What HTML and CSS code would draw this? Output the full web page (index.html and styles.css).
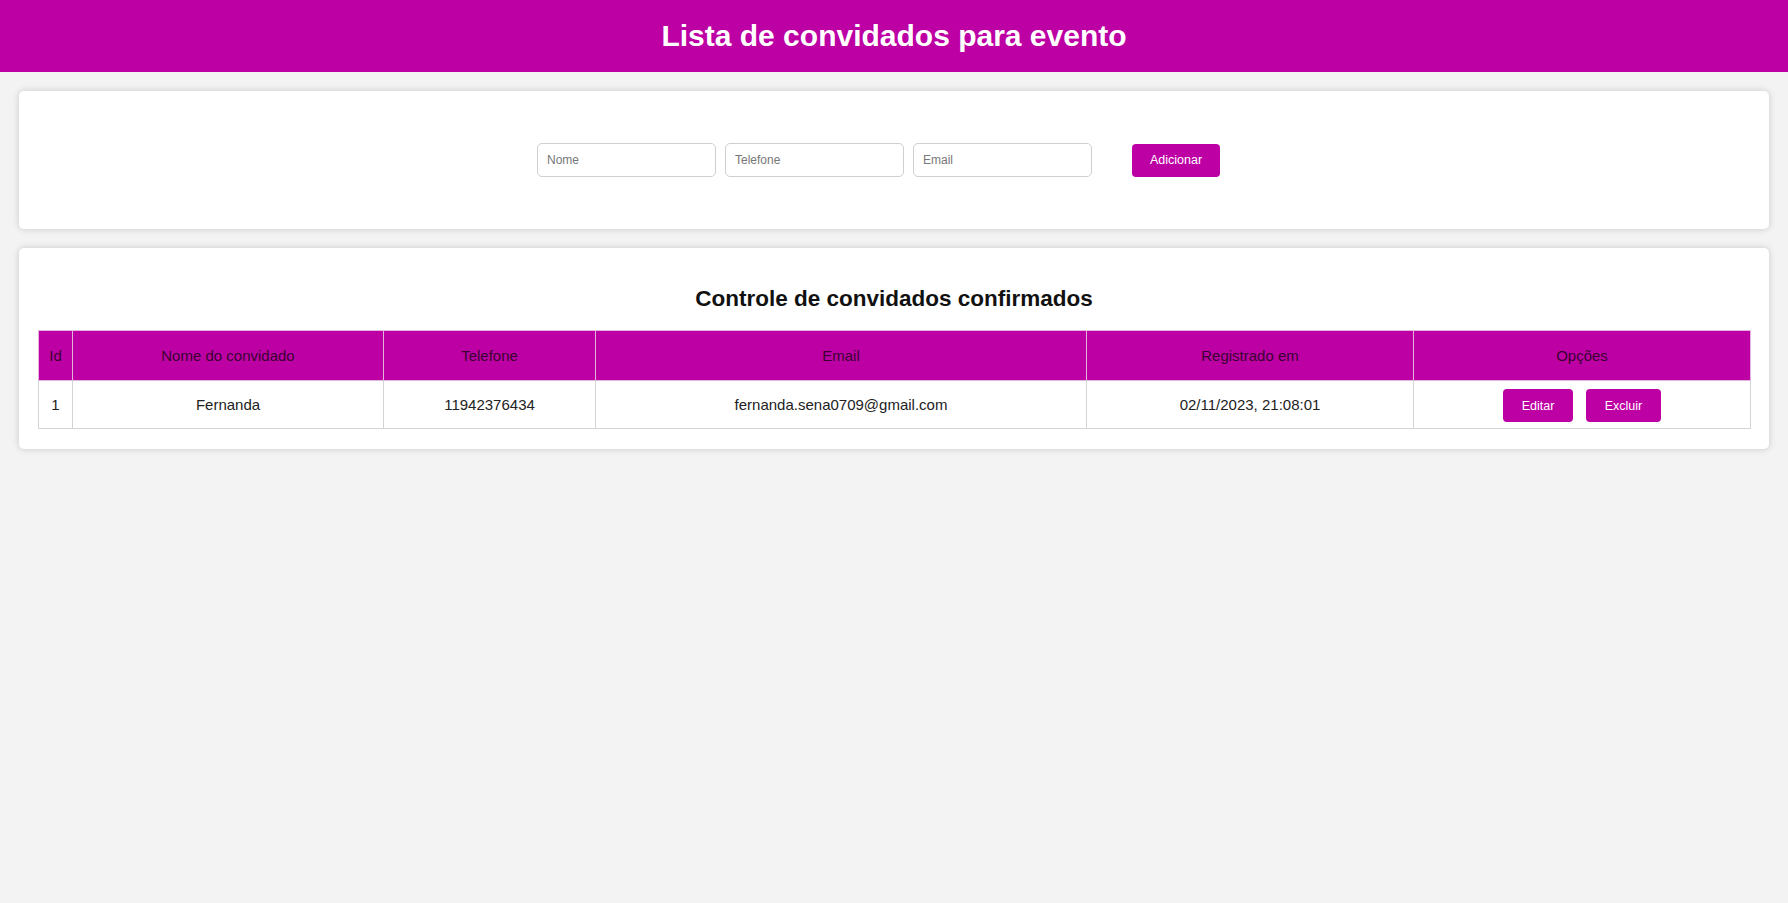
FILE: index.html
```html
<!DOCTYPE html>
<html lang="pt-BR">
<head>
<meta charset="utf-8">
<title>Lista de convidados</title>
<link rel="stylesheet" href="styles.css">
</head>
<body>
<header class="topbar">
  <h1 class="topbar-title">Lista de convidados para evento</h1>
</header>
<main class="page">
  <section class="card form-card">
    <form class="guest-form">
      <input class="field" type="text" placeholder="Nome">
      <input class="field" type="text" placeholder="Telefone">
      <input class="field" type="text" placeholder="Email">
      <button class="btn btn-add" type="button">Adicionar</button>
    </form>
  </section>
  <section class="card list-card">
    <h2 class="list-title">Controle de convidados confirmados</h2>
    <table class="guests">
      <colgroup>
        <col class="c-id"><col class="c-nome"><col class="c-tel"><col class="c-email"><col class="c-reg"><col class="c-opt">
      </colgroup>
      <thead>
        <tr>
          <th>Id</th>
          <th>Nome do convidado</th>
          <th>Telefone</th>
          <th>Email</th>
          <th>Registrado em</th>
          <th>Opções</th>
        </tr>
      </thead>
      <tbody>
        <tr>
          <td>1</td>
          <td>Fernanda</td>
          <td>11942376434</td>
          <td>fernanda.sena0709@gmail.com</td>
          <td>02/11/2023, 21:08:01</td>
          <td>
            <div class="actions">
              <button class="btn btn-edit" type="button">Editar</button>
              <button class="btn btn-del" type="button">Excluir</button>
            </div>
          </td>
        </tr>
      </tbody>
    </table>
  </section>
</main>
</body>
</html>
```

FILE: styles.css
```css
* { box-sizing: border-box; }

html, body {
  margin: 0;
  padding: 0;
  background: #f3f3f3;
  font-family: "Liberation Sans", Arial, sans-serif;
  color: #222;
}

.topbar {
  height: 72px;
  background: #bd00a4;
  display: flex;
  align-items: center;
  justify-content: center;
}

.topbar-title {
  margin: 0;
  color: #fff;
  font-size: 30px;
  font-weight: bold;
  line-height: 34px;
}

.page {
  padding: 19px 19px;
  display: flex;
  flex-direction: column;
  gap: 19px;
}

.card {
  background: #fff;
  border-radius: 5px;
  box-shadow: 0 0 7px rgba(0, 0, 0, 0.18);
}

.form-card {
  height: 138px;
  display: flex;
  align-items: center;
  justify-content: center;
}

.guest-form {
  display: flex;
  align-items: center;
  gap: 9px;
}

.field {
  width: 179px;
  height: 34px;
  border: 1px solid #cfcfcf;
  border-radius: 5px;
  padding: 0 9px;
  font-family: "Liberation Sans", Arial, sans-serif;
  font-size: 12px;
  color: #222;
  background: #fff;
  outline: none;
}

.field::placeholder { color: #777; }

.btn {
  height: 33px;
  border: none;
  border-radius: 4px;
  background: #bd00a4;
  color: #fff;
  font-family: "Liberation Sans", Arial, sans-serif;
  font-size: 12.5px;
  padding: 0 18px;
  cursor: pointer;
}

.btn-add {
  width: 88px;
  padding: 0;
  margin: 0 31px;
}

.list-card {
  padding: 19px 19px 20px;
}

.list-title {
  margin: 19px 0 19px;
  text-align: center;
  font-size: 22.5px;
  line-height: 25px;
  font-weight: bold;
  color: #111;
}

.guests {
  width: 100%;
  border-collapse: collapse;
  table-layout: fixed;
  font-size: 15px;
}

.c-id { width: 34px; }
.c-nome { width: 311px; }
.c-tel { width: 212px; }
.c-email { width: 491px; }
.c-reg { width: 327px; }
.c-opt { width: 337px; }

.guests th {
  height: 50px;
  padding: 0;
  background: #bd00a4;
  color: #3a0032;
  font-weight: normal;
  text-align: center;
  border: 1px solid #e2b6dc;
}

.guests td {
  height: 48px;
  padding: 0;
  text-align: center;
  border: 1px solid #d4d4d4;
  color: #222;
}

.actions {
  display: flex;
  justify-content: center;
  gap: 13px;
  padding-top: 2px;
}

.btn-edit { width: 70px; padding: 0; }
.btn-del { width: 75px; padding: 0; }
```
